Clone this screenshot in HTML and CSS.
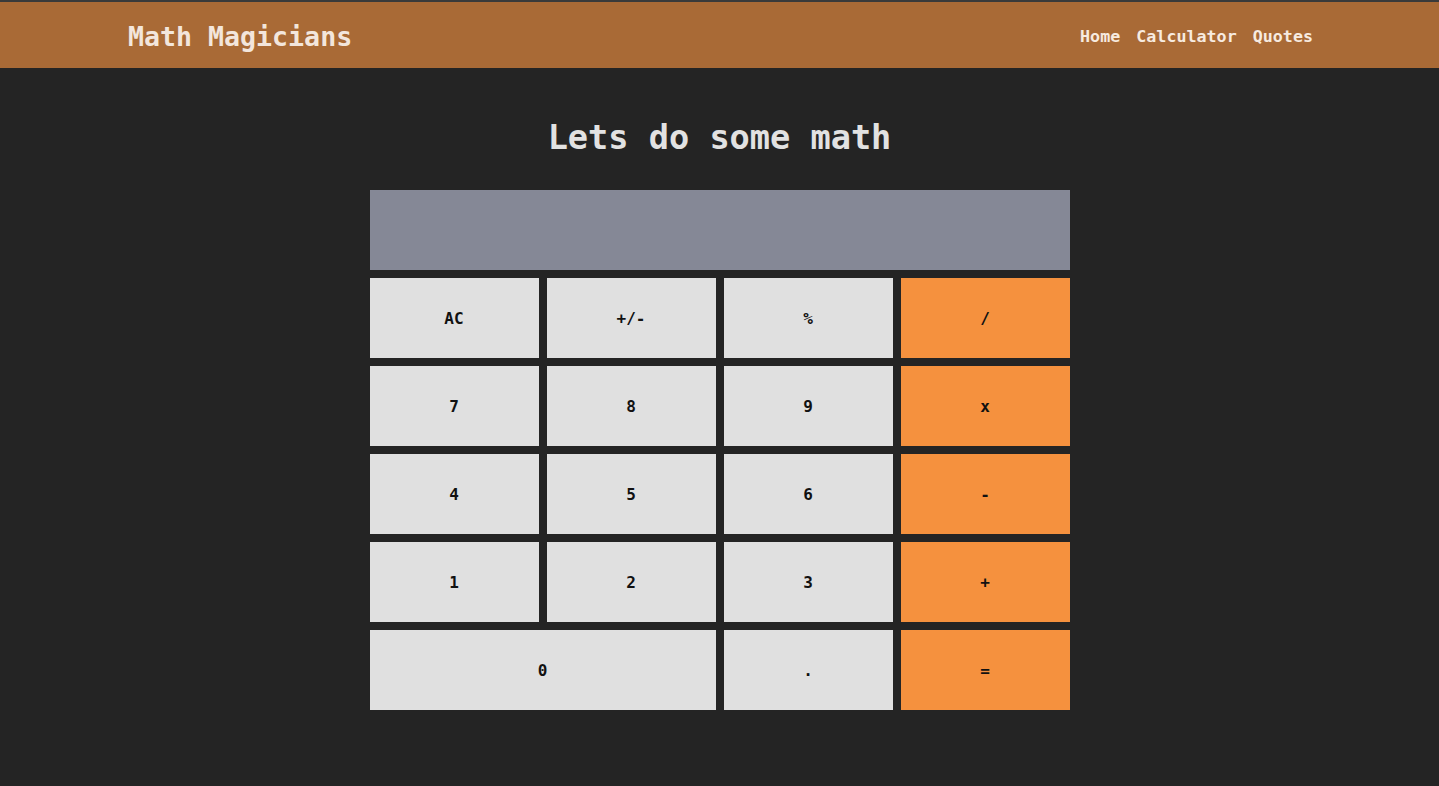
FILE: index.html
```html
<!DOCTYPE html>
<html lang="en">
<head>
<meta charset="utf-8">
<title>Math Magicians</title>
<link rel="stylesheet" href="styles.css">
</head>
<body>
<header class="header">
  <h1 class="brand">Math Magicians</h1>
  <nav class="nav">
    <a class="nav-link" href="#">Home</a>
    <a class="nav-link" href="#">Calculator</a>
    <a class="nav-link" href="#">Quotes</a>
  </nav>
</header>
<main class="main">
  <h2 class="heading">Lets do some math</h2>
  <div class="calc">
    <div class="display"></div>
    <button class="key">AC</button>
    <button class="key">+/-</button>
    <button class="key">%</button>
    <button class="key op">/</button>
    <button class="key">7</button>
    <button class="key">8</button>
    <button class="key">9</button>
    <button class="key op">x</button>
    <button class="key">4</button>
    <button class="key">5</button>
    <button class="key">6</button>
    <button class="key op">-</button>
    <button class="key">1</button>
    <button class="key">2</button>
    <button class="key">3</button>
    <button class="key op">+</button>
    <button class="key wide">0</button>
    <button class="key">.</button>
    <button class="key op">=</button>
  </div>
</main>
</body>
</html>
```
FILE: styles.css
```css
* { box-sizing: border-box; }
html, body { margin: 0; padding: 0; }
body {
  background: #242424;
  font-family: "DejaVu Sans Mono", "Liberation Mono", monospace;
  border-top: 2px solid #3a3a3a;
  min-height: 786px;
}
.header {
  height: 66px;
  background: #a96a36;
  display: flex;
  align-items: center;
  justify-content: space-between;
  padding: 2px 126px 0 128px;
}
.brand {
  margin: 0;
  font-size: 26.6px;
  font-weight: bold;
  color: #f3e6dc;
}
.nav {
  display: flex;
  gap: 16px;
}
.nav-link {
  color: #f7ebe0;
  text-decoration: none;
  font-size: 16.7px;
  font-weight: bold;
}
.main {
  display: flex;
  flex-direction: column;
  align-items: center;
}
.heading {
  margin: 50px 0 0;
  height: 72px;
  font-size: 33.6px;
  font-weight: bold;
  color: #e2e2e2;
}
.calc {
  width: 700px;
  display: grid;
  grid-template-columns: repeat(4, 1fr);
  grid-auto-rows: 80px;
  gap: 8px;
}
.display {
  grid-column: 1 / -1;
  background: #858896;
}
.key {
  border: 0;
  margin: 0;
  background: #e0e0e0;
  color: #111;
  font-family: inherit;
  font-size: 16px;
  font-weight: bold;
  padding: 0;
}
.key.op { background: #f5913e; }
.key.wide { grid-column: span 2; }
```
